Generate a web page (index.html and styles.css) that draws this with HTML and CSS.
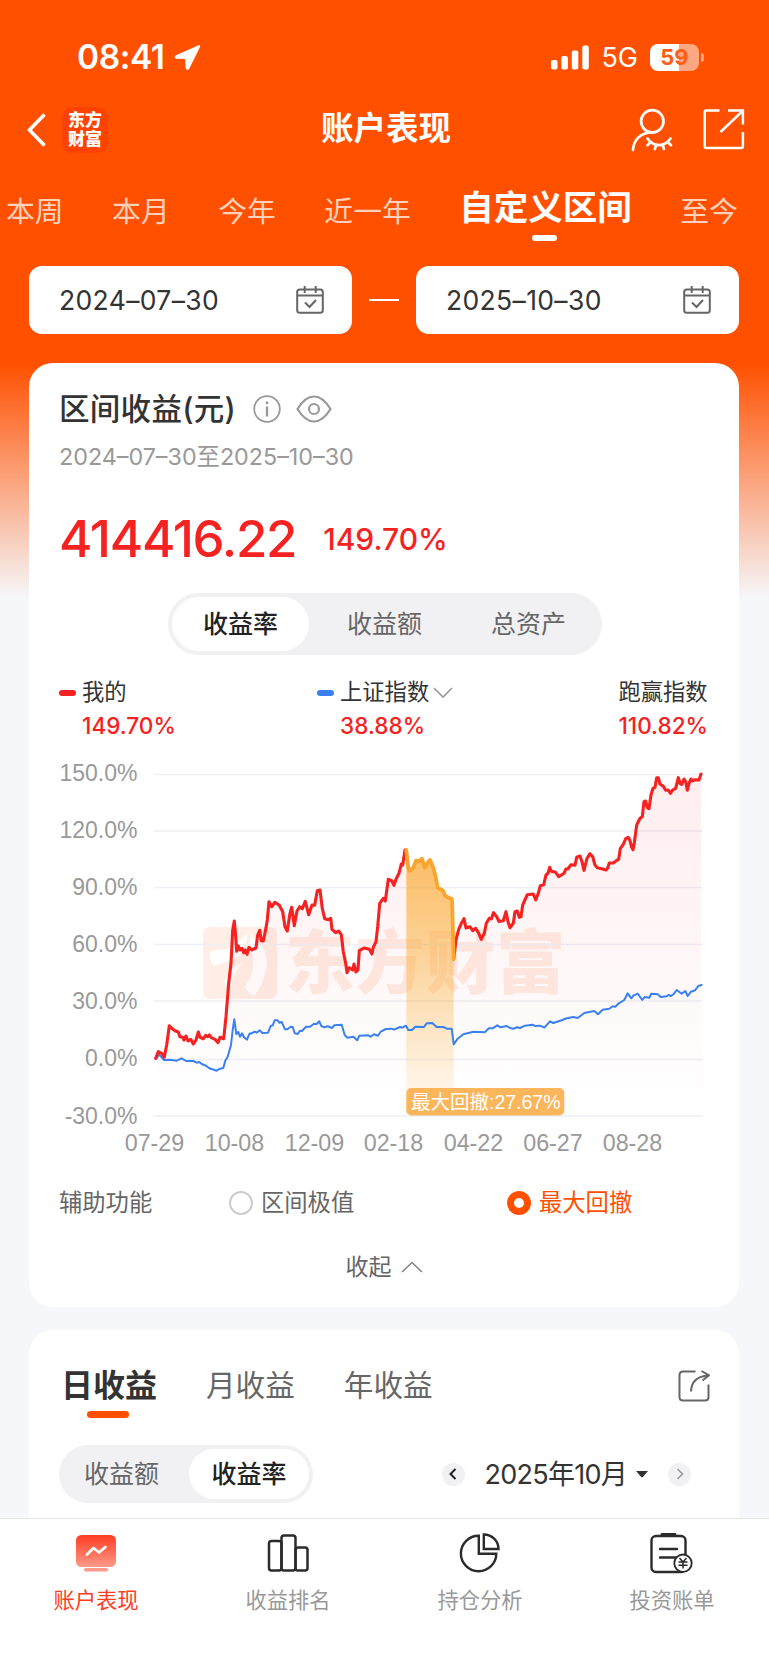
FILE: index.html
```html
<!DOCTYPE html>
<html lang="zh-CN">
<head>
    <meta charset="UTF-8">
    <meta name="viewport" content="width=device-width, initial-scale=1.0">
    <title>账户表现</title>
    <link rel="stylesheet" href="styles.css">
</head>
<body>
<div class="app">
    <div class="status-bar">
        <span class="time">08:41</span>
        <svg class="location" width="27" height="27" viewBox="0 0 27 27"><path d="M24.5 1.2 2 11.2c-2 1-1.500 3.300.5 3.500l8.600.3.6 9c.2 2.200 2.700 2.500 3.700.5L26 3c.6-1.400-.3-2.300-1.500-1.800z" fill="#fff"/></svg>
        <svg class="signal" width="38" height="25" viewBox="0 0 38 25" fill="#fff">
            <rect x="0" y="15" width="6.500" height="9.500" rx="2"/>
            <rect x="10.400" y="11" width="6.500" height="13.500" rx="2"/>
            <rect x="20.800" y="5.500" width="6.500" height="19" rx="2"/>
            <rect x="31.300" y="0.500" width="6.500" height="24" rx="2"/>
        </svg>
        <span class="network">5G</span>
        <span class="battery">59</span>
    </div>

    <div class="nav-bar">
        <div class="nav-left">
            <svg width="20" height="36" viewBox="0 0 20 36"><path d="M17.500 2.500 2.500 18l15 15.500" fill="none" stroke="#fff" stroke-width="3.600"/></svg>
            <span class="logo">东方<br>财富</span>
        </div>
        <h1>账户表现</h1>
        <div class="nav-right">
            <svg width="42" height="44" viewBox="631 107 42 44" fill="none" stroke="#fff" stroke-width="2.700" stroke-linecap="round">
                <circle cx="652.300" cy="120.300" r="11.200"/>
                <path d="M633 149c.6-9.500 7-17.500 19-17.700M647.500 137.500c6 8.700 17 8.700 23 0M650.500 141.200l-3 3M656.300 144l-1.500 4M662.500 144l1.500 4M668 141.200l3 3"/>
            </svg>
            <svg width="42" height="42" viewBox="703 109 42 42" fill="none" stroke="#fff" stroke-width="2.500">
                <path d="M719.500 110.500h-13q-1.800 0-1.800 1.800v34q0 1.800 1.800 1.800h34.600q1.800 0 1.800-1.800V132M728 110.500h14.900v14M742 111.500 720.500 132"/>
            </svg>
        </div>
    </div>

    <div class="range-tabs">
        <span>本周</span>
        <span>本月</span>
        <span>今年</span>
        <span>近一年</span>
        <span class="active">自定义区间</span>
        <span>至今</span>
    </div>

    <div class="date-row">
        <div class="date-box">
            <span>2024–07–30</span>
            <svg width="28" height="28" viewBox="0 0 28 28" fill="none" stroke="#666" stroke-width="2"><rect x="1.200" y="3.500" width="25.600" height="23.300" rx="2.500"/><path d="M1.200 9.500h25.600M8.700 0v7M19.700 0v7M9 16.500l4.500 4.500 6.500-7"/></svg>
        </div>
        <i class="dash"></i>
        <div class="date-box">
            <span>2025–10–30</span>
            <svg width="28" height="28" viewBox="0 0 28 28" fill="none" stroke="#666" stroke-width="2"><rect x="1.200" y="3.500" width="25.600" height="23.300" rx="2.500"/><path d="M1.200 9.500h25.600M8.700 0v7M19.700 0v7M9 16.500l4.500 4.500 6.500-7"/></svg>
        </div>
    </div>

    <div class="card summary">
        <div class="card-title">
            <h2>区间收益(元)</h2>
            <svg width="28" height="28" viewBox="0 0 28 28"><circle cx="14" cy="14" r="12.800" fill="none" stroke="#999" stroke-width="1.800"/><path d="M14 11.500v10" stroke="#999" stroke-width="2.300"/><circle cx="14" cy="7.800" r="1.500" fill="#999"/></svg>
            <svg class="eye" width="36" height="28" viewBox="0 0 36 28" fill="none" stroke="#999" stroke-width="2.200"><path d="M1.500 14Q9 1.500 18 1.500T34.500 14Q27 26.500 18 26.500T1.500 14z"/><circle cx="18" cy="14" r="5"/></svg>
        </div>
        <p class="period">2024–07–30至2025–10–30</p>
        <div class="total">
            <span class="amount">414416.22</span>
            <span class="rate">149.70%</span>
        </div>
        <div class="segment segment-main">
            <span class="active">收益率</span>
            <span>收益额</span>
            <span>总资产</span>
        </div>
        <div class="legend">
            <div class="legend-item mine">
                <i class="mark red"></i>
                <div><p>我的</p><b>149.70%</b></div>
            </div>
            <div class="legend-item index">
                <i class="mark blue"></i>
                <div>
                    <p>上证指数<svg width="20" height="12" viewBox="0 0 20 12"><path d="M1 1l9 9 9-9" fill="none" stroke="#999" stroke-width="1.600"/></svg></p>
                    <b>38.88%</b>
                </div>
            </div>
            <div class="legend-item beat">
                <div><p>跑赢指数</p><b>110.82%</b></div>
            </div>
        </div>

        <svg class="chart" width="709" height="410" viewBox="30 755 709 410">
            <defs>
                <linearGradient id="redFill" x1="0" y1="774" x2="0" y2="1116" gradientUnits="userSpaceOnUse">
                    <stop offset="0" stop-color="#f5222d" stop-opacity=".08"/>
                    <stop offset="1" stop-color="#f5222d" stop-opacity="0"/>
                </linearGradient>
                <linearGradient id="drawdownFill" x1="0" y1="850" x2="0" y2="1100" gradientUnits="userSpaceOnUse">
                    <stop offset="0" stop-color="#faa52e" stop-opacity=".75"/>
                    <stop offset=".4" stop-color="#faa52e" stop-opacity=".5"/>
                    <stop offset="1" stop-color="#faa52e" stop-opacity=".08"/>
                </linearGradient>
            </defs>

            <!-- watermark -->
            <g class="watermark">
                <path fill-rule="evenodd" d="M211 927h58q8 0 8 8v56q0 8-8 8h-58q-8 0-8-8v-56q0-8 8-8zM210 952.500q2-2.500 16-3.500 10-3 17-12l5-4-2 9q-4 15-14 18-8 2-18 6-5-5-4-13.500zM250.500 932q1 5 6 9 12 9 10 25-2 17-12 29.500-5-1-10-8.500 11-14 8-32-2-6-5-7 3-6 3-16zM243 962q-11 5-19 20 4 5 7 5 2-13 12-25z"/>
                <text x="285" y="988">东方财富</text>
            </g>

            <g class="grid">
                <path d="M154 774.500h549M154 831h549M154 887.500h549M154 944.500h549M154 1001h549M154 1059.500h549M154 1116h549"/>
            </g>

            <g class="y-axis">
                <text x="137.500" y="781">150.0%</text>
                <text x="137.500" y="838">120.0%</text>
                <text x="137.500" y="895">90.0%</text>
                <text x="137.500" y="952">60.0%</text>
                <text x="137.500" y="1009">30.0%</text>
                <text x="137.500" y="1066">0.0%</text>
                <text x="137.500" y="1123.500">-30.0%</text>
            </g>
            <g class="x-axis">
                <text x="154.500" y="1151">07-29</text>
                <text x="234.500" y="1151">10-08</text>
                <text x="314.500" y="1151">12-09</text>
                <text x="393.500" y="1151">02-18</text>
                <text x="473.500" y="1151">04-22</text>
                <text x="553" y="1151">06-27</text>
                <text x="632.500" y="1151">08-28</text>
            </g>

            <path fill="url(#redFill)" d="M155.700 1116V1058.300L158.300 1051.700 164.300 1057.300 166.700 1045 169.300 1025.700 178.300 1032.700 188 1041 198.300 1032 203.300 1038.700 209.300 1035 218 1042.700 223.700 1038.700 228.700 983.300 231 963.300 234.300 921 236.700 951.300 247 952 256 948 259.700 930.300 263.300 941 267.300 920 269 901.700 279.300 905.300 287.300 931 291.700 907.300 294.300 925.700 300 906 308.700 912 317.300 890.700 320 890 324.700 918.700 332 929.300 341.300 934.700 347 972.700 358 970 359.300 950.700 372 954 376 941.700 379.700 903.300 385.300 901 388.300 879.300 394 885.300 401.300 864 406.300 850V1116zM453.700 1116V959L464 918.700 470 926.700 481.300 939.300 493.300 912.700 503.300 920.700 506 911.700 510 927.700 517.300 911 521 916.700 527.300 894.700 535.700 900 549.700 867.300 558.700 876.700 580 856 584 870.300 590 853.700 597.300 867.700 606 870 618.700 859 628.300 837.300 633 849.700 636.700 825 642.300 816.700 645.700 801 649 808.700 657 777.700 670.300 793.300 678.300 777.700 687.300 788 701 774V1116z"/>
            <path fill="url(#drawdownFill)" d="M406.300 1100V850L408.300 868.300 410 870.700 416 860.700 422 858.700 424.700 867.700 430 860 435.700 877.300 437.700 888 442.700 890.300 445.300 896 452 899 453.700 959V1100z"/>

            <polyline class="line index-line" points="155.700,1059 159.300,1054.700 164,1060 170,1059.700 176.700,1060.700 181.700,1058.300 186,1061 193.300,1061 196.700,1062.700 199.300,1062 201.700,1064 206,1065.700 209.300,1068.300 216.700,1070.700 219.300,1069 223.300,1068 225.300,1060.700 227.700,1056.700 231,1045 232.700,1030 234.300,1019.300 236.300,1034 238.300,1032 240,1036.700 242,1033.300 244,1037.300 247,1039.700 249.300,1034 255,1031.700 256.700,1032.700 259.700,1030.300 262.300,1033 268,1032.700 270.700,1026 272.700,1025.300 274.700,1020.300 277.700,1020.300 279.300,1022.700 281.700,1022 285,1029.300 287.300,1029.300 290.700,1026.700 292.700,1027 294.700,1033.300 297.700,1034 300,1030.700 302,1031 306,1026.700 310,1026.700 314,1023.700 316.700,1024 319.300,1021.300 321.300,1026 324.300,1027.300 327.700,1026.300 332,1028 334.300,1025.300 341.700,1024.700 344.700,1035 347.300,1037.700 353.300,1036.700 357.300,1040.300 359.300,1035.700 368.300,1035.300 370.700,1036.700 374,1034.300 378,1035.700 380.700,1031.700 386,1029 391.700,1028.700 394,1029.700 400,1027 402.300,1027.700 406,1025.700 408.300,1030 412,1030 415.300,1026.700 424,1027 426.700,1023.300 432.300,1023 436.700,1027 443.300,1027 446.700,1028.700 451.700,1028.700 453.700,1044.300 457.700,1038.700 463.300,1034.300 473.300,1031.700 484.700,1032.300 489,1028.300 492.700,1028.300 497.300,1025.300 500.700,1027.300 506.700,1026 510,1028 513.300,1028.700 517,1027.300 520,1028 525,1025.700 532.700,1024.700 535,1026 540,1025.700 544.300,1027.700 550,1021.300 553.300,1023 561.700,1020.300 566.700,1018.300 573.300,1017 577.700,1018 584.300,1013 594.300,1011 598,1014.300 602.700,1009.700 609.300,1008.700 612.700,1006.300 615.300,1006.700 618.300,1003.700 624.300,1000 627.700,993.300 631.300,998.300 633.300,995.700 637.700,993.700 642.300,1000 644.700,997 649.300,997.700 651.300,993.700 657.700,994.300 660.700,997 666.700,996.300 668.300,995 671,996 674,993.700 676.700,990 681.700,993.700 685.300,991 687.700,996 691,991.700 695,990.300 698.300,986 701.700,985"/>

            <polyline class="line mine-line" points="155.700,1058.300 158.300,1051.700 161.700,1053.300 164.300,1057.300 166.700,1045 169.300,1025.700 171.700,1028.300 175,1030.700 178.300,1032 180,1036.700 182.700,1037.300 184,1040 186,1036 188,1041 190.700,1039.300 193.300,1044 196,1040 198.300,1032 200,1037.300 203.300,1038.700 205.700,1035.300 207.700,1036.700 209.300,1035 211.300,1037.700 215,1039.300 218,1042.700 220,1037.300 223.700,1038.700 226,1016.700 228.700,983.300 231,963.300 232.700,930 234.300,921 235.700,936.700 236.700,951.300 238.300,946 240,950 242,948.300 243.700,952.700 245.300,950 247,954.300 249,947.300 251.700,950 256,948 257.700,935 259.700,930.300 261.300,940.700 263.300,941 265.300,931.700 267.300,920 269,901.700 271.700,906.700 275,902.300 279.300,905.300 282.700,911.700 285,926.700 287.300,931 290,913.300 291.700,907.300 294.300,925.700 297,911 299.700,906.700 302.300,908.700 305.300,901.300 308.700,914.700 312,905 314.700,905.300 317.300,890.700 320,890 322.300,908.300 324.700,918.700 328.300,919.700 330.700,918.300 332,929.300 335.700,932.700 338.700,931 341.300,934.700 343.300,951.700 345.700,963.300 347,972.700 349.300,967.700 352.700,970 354,964 356,972 358,970 359.300,950.700 364,948 369.300,949.300 372,954 373.300,947.300 376,941.700 377.700,926.700 379.700,903.300 383.300,898.300 385.300,901 388.300,879.300 391.700,880.700 394,885.300 396,879.300 399,873.300 401.300,864 402.700,865 405,850 406.300,850"/>
            <polyline class="line mine-line" points="453.700,959 456,940 458.700,929.300 461.700,922.700 464,918.700 466,928 470,926.700 472.700,930.700 475.700,928.300 478.700,933.300 481.300,939.300 484.300,933.300 486.300,923.300 489.300,918.300 491.300,919 493.500,912.700 496.700,916.700 499,921.500 503.300,920.700 506,911.700 508,921.700 510,927.700 513.300,923.300 515,911.700 517.300,911 519.300,917.300 521,916.700 522.700,905 527.300,894.700 533.300,894 535.700,900 538.300,893.300 540.300,885.700 543.700,884.700 546,875 548,873.300 549.700,867.300 551.300,871.300 555.700,872.300 558.700,876.700 564,873.300 566,869 568,868.700 571,864.700 575,865.300 576.700,857.300 580,856 582,861.700 584,870.300 587,858.300 590,853.700 592.700,856.700 595,865 597.300,867.700 601.700,868.700 606,870 607.700,868 609.300,863 613.300,863 616,861 618.700,859 620.300,848.700 623.300,844.300 625.700,838.700 628.300,837.300 630,840.700 631.700,847.300 633,849.700 634.300,842.700 636.700,825 640,818.300 642.300,816.700 644,801.700 645.700,801 647.300,807.700 649,808.700 651,795 653,788.300 655,787.300 656.700,777.700 658.300,777.700 660,784 663.300,786.300 665.700,790.300 668.300,790 670.300,793.300 672.700,790 675.700,788.300 678.300,777.700 680,783.300 681.700,784.300 684,779 685.700,781.700 687.300,790.300 689.300,782.700 691,779 692.700,781 695,779.700 699,780 701,774"/>
            <polyline class="line drawdown-line" points="406.300,850 408.300,868.300 410,870.700 413.300,867.700 416,860.700 419.300,861.300 422,858.700 424.700,867.700 427.300,863.300 430,860 433.300,867.700 435.700,877.300 437.700,888 442.700,890.300 445.300,896 449.300,898 452,899 453.700,959"/>

            <rect x="406.300" y="1088" width="158" height="27.500" rx="5" fill="#fbb55a"/>
            <text class="drawdown-label" x="411" y="1108.500">最大回撤:27.67%</text>
        </svg>

        <div class="assist">
            <span class="assist-title">辅助功能</span>
            <label class="radio"><i></i>区间极值</label>
            <label class="radio checked"><i></i>最大回撤</label>
        </div>
        <div class="collapse">收起<svg width="22" height="12" viewBox="0 0 22 12"><path d="M1 11 11 1.500 21 11" fill="none" stroke="#888" stroke-width="1.600"/></svg></div>
    </div>

    <div class="card detail">
        <div class="detail-tabs">
            <span class="active">日收益</span>
            <span>月收益</span>
            <span>年收益</span>
            <svg width="32" height="32" viewBox="0 0 32 32" fill="none" stroke="#666" stroke-width="2"><path d="M17.500 1.500H5Q1.500 1.500 1.500 5v22q0 3.500 3.500 3.500h22q3.500 0 3.500-3.500V14.500M13 21.500Q13.500 6.500 30.500 5.500M23.500 1l7.500 4.300-6.500 5.200"/></svg>
        </div>
        <div class="detail-bar">
            <div class="segment segment-small">
                <span>收益额</span>
                <span class="active">收益率</span>
            </div>
            <div class="month">
                <i class="arrow"><svg width="8" height="12" viewBox="0 0 8 12"><path d="M6.500 1 1.500 6l5 5" fill="none" stroke="#222" stroke-width="2"/></svg></i>
                <span>2025年10月</span>
                <svg class="caret" width="12" height="7" viewBox="0 0 12 7"><path d="M0 0h12L6.800 6q-.8.800-1.600 0z" fill="#333"/></svg>
                <i class="arrow"><svg width="8" height="12" viewBox="0 0 8 12"><path d="M1.500 1l5 5-5 5" fill="none" stroke="#999" stroke-width="1.600"/></svg></i>
            </div>
        </div>
    </div>

    <div class="tab-bar">
        <div class="tab active">
            <svg width="44" height="44" viewBox="0 0 44 44">
                <defs><linearGradient id="tabFill" x1="0" y1="0" x2="0" y2="1"><stop offset="0" stop-color="#fe3d22"/><stop offset="1" stop-color="#ff9a8a"/></linearGradient></defs>
                <rect x="2" y="4" width="40" height="32" rx="5.500" fill="url(#tabFill)"/>
                <rect x="10" y="37" width="24" height="3.500" rx="1.700" fill="#ff9a8a"/>
                <path d="M13 23.500l6.500-6.500 5.500 4.500 6.500-5.500" fill="none" stroke="#fff" stroke-width="2.600" stroke-linecap="round" stroke-linejoin="round"/>
            </svg>
            账户表现
        </div>
        <div class="tab">
            <svg width="44" height="44" viewBox="0 0 44 44" fill="none" stroke="#2b2b2b" stroke-width="2.500"><rect x="3" y="10" width="12.500" height="29.500" rx="2.500"/><rect x="15.500" y="4.500" width="14" height="35" rx="2.500"/><rect x="29.500" y="16.500" width="12" height="23" rx="2.500"/></svg>
            收益排名
        </div>
        <div class="tab">
            <svg width="44" height="44" viewBox="0 0 44 44" fill="none" stroke="#2b2b2b" stroke-width="2.400"><path d="M20.800 4.800A17.700 17.700 0 1 0 38.300 22.700H20.800zM25.800 3.500V18H40.500A14.600 14.600 0 0 0 25.800 3.500z"/></svg>
            持仓分析
        </div>
        <div class="tab">
            <svg width="44" height="44" viewBox="0 0 44 44" fill="none" stroke="#2b2b2b" stroke-width="2.400">
                <rect x="1.500" y="5" width="34" height="36" rx="4.500"/><path d="M12 3.500h13" stroke-width="2.800" stroke-linecap="round"/><path d="M10 18h17M10 26.500h17" stroke-linecap="round"/>
                <circle cx="33" cy="32.200" r="8.700" fill="#fff" stroke-width="1.800"/><path d="M29.500 27l3.500 4 3.500-4M33 31v6.500M28.500 31h9M28.500 34.300h9" stroke-width="1.500"/>
            </svg>
            投资账单
        </div>
    </div>
</div>
</body>
</html>
```
FILE: styles.css
```css
* {
    box-sizing: border-box;
}
body, h1, h2, p {
    margin: 0;
}
body {
    font-family: Inter, "Noto Sans CJK SC", sans-serif;
    line-height: 1;
    color: #333;
}
i, b {
    font-style: normal;
    font-weight: 500;
}
svg {
    display: block;
    flex: none;
}
.app {
    width: 769px;
    height: 1665px;
    overflow: hidden;
    display: flex;
    flex-direction: column;
    background: linear-gradient(#ff5000 363px, #f6f7fa 598px);
}

/* status bar */
.status-bar {
    height: 90px;
    padding: 25px 70px 0 77px;
    display: flex;
    align-items: center;
    color: #fff;
}
.time {
    font-size: 33.5px;
    font-weight: 600;
    letter-spacing: -0.4px;
}
.location {
    margin-left: 9px;
}
.signal {
    margin-left: auto;
}
.network {
    font-size: 27px;
    margin: 0 12px;
}
.battery {
    position: relative;
    width: 49px;
    height: 27px;
    border-radius: 8px;
    background: linear-gradient(to right, #fff 59%, #ffa780 59%);
    color: #ff5f14;
    font-size: 22px;
    font-weight: 700;
    line-height: 27px;
    text-align: center;
}
.battery::after {
    content: "";
    position: absolute;
    left: 51px;
    top: 9px;
    width: 3px;
    height: 9px;
    border-radius: 0 4px 4px 0;
    background: #ffa780;
}

/* nav bar */
.nav-bar {
    height: 78px;
    padding: 1px 24px 0 27px;
    display: grid;
    grid-template-columns: 1fr auto 1fr;
    align-items: center;
    color: #fff;
}
.nav-bar h1 {
    font-size: 32.5px;
    font-weight: 700;
}
.nav-left, .nav-right {
    display: flex;
    align-items: center;
}
.nav-left {
    gap: 15px;
}
.nav-right {
    justify-content: flex-end;
    gap: 30px;
}
.logo {
    width: 46px;
    height: 46px;
    border-radius: 10px;
    background: #ff4200;
    font-size: 17px;
    font-weight: 900;
    line-height: 19.5px;
    padding-top: 4px;
    text-align: center;
}

/* range tabs */
.range-tabs {
    height: 98px;
    padding: 29.5px 0 0 6px;
    display: flex;
    gap: 48.5px;
    white-space: nowrap;
    font-size: 28.8px;
    color: #ffd0ba;
}
.range-tabs .active {
    position: relative;
    top: -7px;
    font-size: 34.5px;
    font-weight: 700;
    color: #fff;
}
.range-tabs .active::after {
    content: "";
    position: absolute;
    left: 73px;
    top: 44px;
    width: 25px;
    height: 6px;
    border-radius: 3px;
    background: #fff;
}

/* dates */
.date-row {
    padding: 0 30px 0 29px;
    display: flex;
    align-items: center;
    justify-content: space-between;
}
.date-box {
    width: 323px;
    height: 68px;
    padding: 0 28px 0 30px;
    border-radius: 13px;
    background: #fff;
    display: flex;
    align-items: center;
    justify-content: space-between;
    font-size: 26.5px;
    letter-spacing: 0.35px;
}
.dash {
    width: 30px;
    height: 2px;
    background: #fff;
}

/* cards */
.card {
    margin: 0 30px 0 29px;
    background: #fff;
    border-radius: 24px;
    flex: none;
}
.summary {
    margin-top: 29px;
    height: 944px;
}
.card-title {
    height: 92px;
    padding-left: 30px;
    display: flex;
    align-items: center;
}
.card-title h2 {
    font-size: 30.5px;
    font-weight: 500;
    letter-spacing: 0.3px;
    margin-right: 17px;
}
.eye {
    margin-left: 15px;
}
.period {
    margin-top: -10.5px;
    padding-left: 30px;
    height: 54.5px;
    font-size: 23.3px;
    color: #999;
}
.total {
    height: 94px;
    padding: 0 0 15px 30px;
    display: flex;
    align-items: center;
    gap: 27px;
    color: #f52222;
}
.amount {
    font-size: 51px;
    font-weight: 500;
    letter-spacing: -1.3px;
}
.rate {
    padding-top: 1px;
    font-size: 30px;
    font-weight: 500;
}
.segment {
    display: flex;
    background: #f1f1f4;
    color: #666;
    font-size: 25px;
}
.segment span {
    display: flex;
    flex: 1;
    align-items: center;
    justify-content: center;
}
.segment .active {
    background: #fff;
    color: #222;
    font-weight: 500;
}
.segment-main {
    width: 434px;
    height: 62px;
    margin-left: 139px;
    padding: 4px;
    border-radius: 31px;
}
.segment-main span {
    border-radius: 27px;
    flex: none;
    width: 137px;
}
.segment-main span:nth-child(2) {
    width: 151px;
}

/* legend */
.legend {
    height: 100px;
    padding: 26px 31px 0 30px;
    display: grid;
    grid-template-columns: 258px 1fr auto;
}
.legend-item {
    display: flex;
    gap: 6px;
    font-size: 22.3px;
}
.legend-item p {
    display: flex;
    align-items: center;
    color: #333;
    margin-bottom: 11.5px;
}
.legend-item p svg {
    margin: 2px 0 0 4px;
}
.legend-item b {
    display: block;
    color: #f52222;
    font-size: 22.6px;
}
.legend-item.beat {
    text-align: right;
}
.mark {
    width: 17px;
    height: 6px;
    margin-top: 9px;
    border-radius: 3px;
}
.mark.red {
    background: #f52222;
}
.mark.blue {
    background: #3a80f0;
}

/* chart */
.chart {
    margin-left: 1px;
}
.grid path {
    stroke: #eef0f5;
    stroke-width: 1.5;
}
.watermark {
    fill: #f9600e;
    opacity: 0.11;
}
.watermark text {
    font-family: "Noto Sans CJK SC", sans-serif;
    font-size: 69.5px;
    font-weight: 900;
    letter-spacing: 0.8px;
}
.y-axis, .x-axis {
    font-family: "Liberation Sans", Arial, sans-serif;
    font-size: 23.3px;
    fill: #999;
}
.y-axis {
    font-size: 23px;
    text-anchor: end;
}
.x-axis {
    text-anchor: middle;
}
.line {
    fill: none;
    stroke-linejoin: round;
    stroke-linecap: round;
}
.mine-line {
    stroke: #f52222;
    stroke-width: 3.1;
}
.index-line {
    stroke: #3a80f0;
    stroke-width: 2;
}
.drawdown-line {
    stroke: #faa52e;
    stroke-width: 3.8;
}
.drawdown-label {
    font-family: "Liberation Sans", "Noto Sans CJK SC", sans-serif;
    font-size: 19.5px;
    fill: #fff;
}

/* options under the chart */
.assist {
    height: 76px;
    padding-left: 30px;
    display: flex;
    align-items: center;
    font-size: 23.3px;
    color: #666;
}
.assist-title {
    flex: none;
    width: 170px;
}
.radio {
    flex: none;
    display: flex;
    align-items: center;
    gap: 8px;
    width: 278px;
}
.radio.checked {
    width: auto;
    color: #ff5000;
}
.radio i {
    width: 24px;
    height: 24px;
    border-radius: 50%;
    border: 2px solid #ccc;
}
.radio.checked i {
    border: 7px solid #ff5000;
}
.collapse {
    height: 52px;
    display: flex;
    align-items: center;
    justify-content: center;
    gap: 9px;
    font-size: 23px;
    color: #666;
}

/* daily detail */
.detail {
    margin-top: 23px;
    height: 188px;
    border-radius: 24px 24px 0 0;
}
.detail-tabs {
    height: 115px;
    padding: 0 29px 4px 32px;
    display: flex;
    align-items: center;
    gap: 49px;
    font-size: 29.6px;
    color: #666;
}
.detail-tabs .active {
    position: relative;
    font-size: 32px;
    font-weight: 700;
    color: #333;
}
.detail-tabs .active::after {
    content: "";
    position: absolute;
    left: 26px;
    top: 41px;
    width: 42px;
    height: 7px;
    border-radius: 3.5px;
    background: #ff5000;
}
.detail-tabs svg {
    margin-left: auto;
}
.detail-bar {
    padding: 0 48px 0 30px;
    display: flex;
    align-items: center;
    justify-content: space-between;
}
.segment-small {
    width: 254px;
    height: 58px;
    padding: 4px;
    border-radius: 29px;
}
.segment-small span {
    border-radius: 25px;
}
.segment-small span:first-child {
    flex: none;
    width: 126px;
    padding-right: 9px;
}
.month {
    display: flex;
    align-items: center;
    font-size: 27px;
    color: #333;
}
.month span {
    margin-left: 20px;
    letter-spacing: -0.75px;
}
.caret {
    margin: 0 20px 0 9px;
}
.arrow {
    width: 23px;
    height: 23px;
    border-radius: 50%;
    background: #f1f1f4;
    display: flex;
    align-items: center;
    justify-content: center;
}

/* bottom tabs */
.tab-bar {
    flex: 1;
    background: #fff;
    border-top: 1px solid #e8e8e8;
    display: flex;
}
.tab {
    width: 192px;
    padding-top: 12px;
    display: flex;
    flex-direction: column;
    align-items: center;
    gap: 15px;
    font-size: 21.3px;
    color: #999;
}
.tab.active {
    color: #fe3d22;
}
```
